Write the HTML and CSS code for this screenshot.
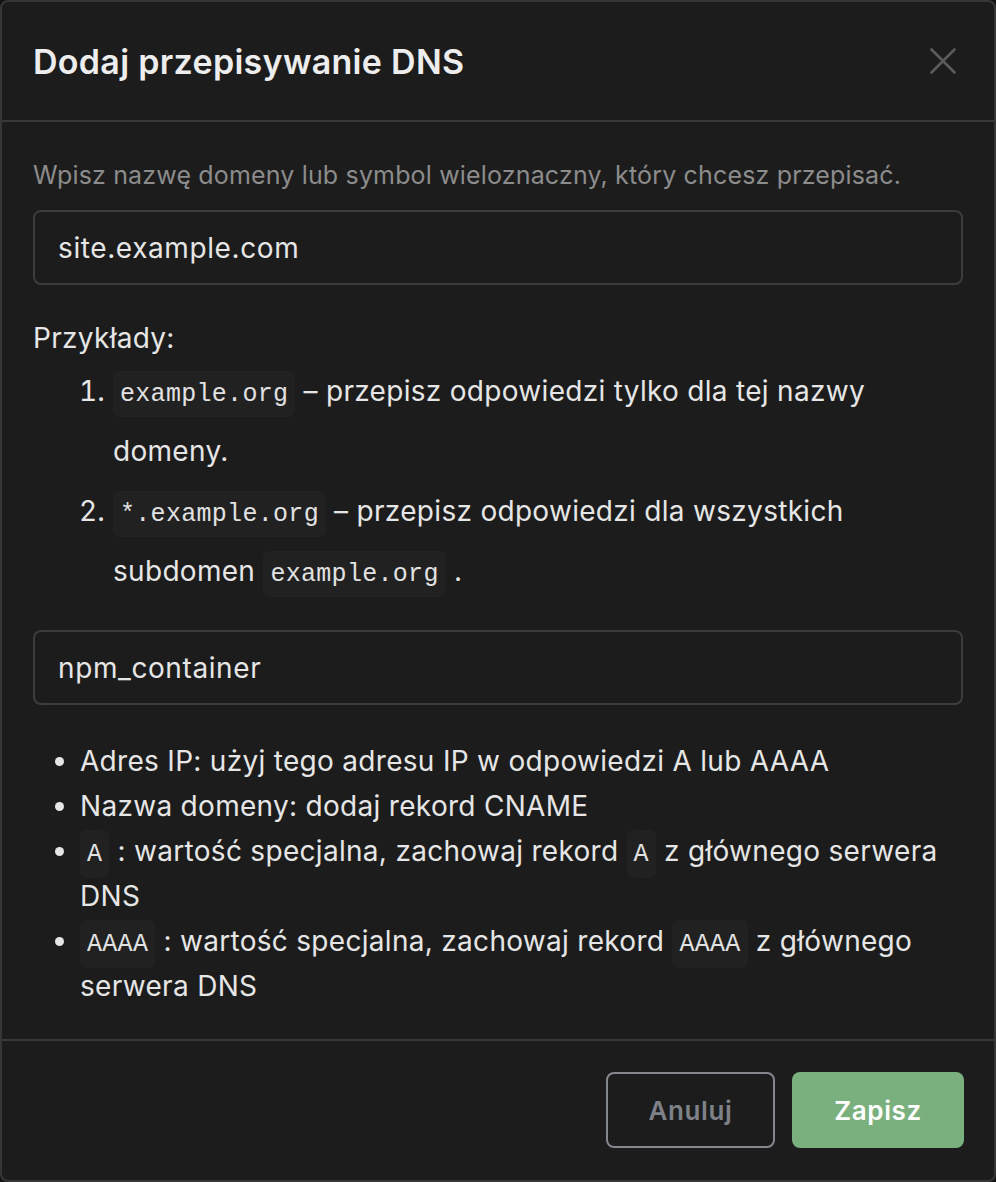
FILE: index.html
```html
<!DOCTYPE html>
<html lang="pl">
<head>
<meta charset="utf-8">
<title>Dodaj przepisywanie DNS</title>
<link rel="stylesheet" href="styles.css">
</head>
<body>
<div class="modal">
  <header class="modal-header">
    <h1 class="modal-title">Dodaj przepisywanie DNS</h1>
    <button class="close" aria-label="Zamknij">
      <svg width="26" height="26" viewBox="0 0 26 26"><path d="M1.5 1.5 L24.5 24.5 M24.5 1.5 L1.5 24.5" stroke="#5b5b5b" stroke-width="2.6" stroke-linecap="round" fill="none"/></svg>
    </button>
  </header>
  <div class="modal-body">
    <p class="hint">Wpisz nazwę domeny lub symbol wieloznaczny, który chcesz przepisać.</p>
    <input class="field" type="text" value="site.example.com">
    <p class="examples-title">Przykłady:</p>
    <ol class="examples">
      <li><code>example.org</code> – przepisz odpowiedzi tylko dla tej nazwy domeny.</li>
      <li><code>*.example.org</code> – przepisz odpowiedzi dla wszystkich subdomen <code>example.org</code> .</li>
    </ol>
    <input class="field field-2" type="text" value="npm_container">
    <ul class="notes">
      <li>Adres IP: użyj tego adresu IP w odpowiedzi A lub AAAA</li>
      <li>Nazwa domeny: dodaj rekord CNAME</li>
      <li><code>A</code> : wartość specjalna, zachowaj rekord <code>A</code> z głównego serwera DNS</li>
      <li><code>AAAA</code> : wartość specjalna, zachowaj rekord <code>AAAA</code> z głównego serwera DNS</li>
    </ul>
  </div>
  <footer class="modal-footer">
    <button class="btn btn-cancel">Anuluj</button>
    <button class="btn btn-save">Zapisz</button>
  </footer>
</div>
</body>
</html>
```

FILE: styles.css
```css
* { box-sizing: border-box; }
html, body {
  margin: 0;
  padding: 0;
  background: #141414;
}
body {
  font-family: Inter, "Noto Sans", "Liberation Sans", sans-serif;
  color: #e6e6e6;
}
.modal {
  width: 996px;
  height: 1182px;
  background: #1c1c1c;
  border: 2px solid #363636;
  border-radius: 8px;
  display: flex;
  flex-direction: column;
  overflow: hidden;
}
.modal-header {
  height: 120px;
  flex: none;
  display: flex;
  align-items: center;
  justify-content: space-between;
  padding: 0 38px 0 31px;
  border-bottom: 2px solid #383838;
}
.modal-title {
  margin: 0;
  font-size: 34px;
  font-weight: 600;
  color: #ededed;
  letter-spacing: 0.3px;
}
.close {
  background: none;
  border: 0;
  padding: 0;
  width: 26px;
  height: 26px;
  display: flex;
  cursor: pointer;
}
.modal-body {
  flex: 1;
  padding: 37px 31px 0 31px;
}
.hint {
  margin: 0 0 19px;
  font-size: 25px;
  line-height: 32px;
  letter-spacing: 0.16px;
  color: #8c8c8c;
}
.field {
  display: block;
  width: 100%;
  height: 75px;
  background: #1c1c1c;
  border: 2px solid #3c3c3c;
  border-radius: 8px;
  padding: 0 23px;
  font-family: Inter, "Noto Sans", "Liberation Sans", sans-serif;
  font-size: 28px;
  letter-spacing: 0.6px;
  color: #e6e6e6;
  outline: none;
}
.examples-title {
  margin: 35px 0 5px;
  font-size: 28px;
  line-height: 36px;
  letter-spacing: 0.3px;
}
.examples {
  margin: 0;
  padding-left: 80px;
  font-size: 28px;
  line-height: 60px;
  letter-spacing: 0.3px;
}
code {
  font-family: "Liberation Mono", "DejaVu Sans Mono", monospace;
  font-size: 25px;
  line-height: 1;
  letter-spacing: 0.3px;
  background: #212121;
  border-radius: 6px;
  padding: 9px 7px 8px;
  color: #e2e2e2;
}
.field-2 {
  margin-top: 29px;
}
.notes {
  margin: 34px 0 0;
  padding-left: 47px;
  font-size: 28px;
  line-height: 45px;
  letter-spacing: 0.3px;
}
.notes code {
  padding: 10px 7px 9px;
}
.modal-footer {
  flex: none;
  border-top: 2px solid #383838;
  padding: 31px 30px 32px;
  display: flex;
  justify-content: flex-end;
  gap: 17px;
}
.btn {
  height: 76px;
  border-radius: 8px;
  font-family: Inter, "Noto Sans", "Liberation Sans", sans-serif;
  font-size: 26px;
  font-weight: 600;
  letter-spacing: 0.6px;
  cursor: pointer;
}
.btn-cancel {
  width: 169px;
  background: transparent;
  border: 2px solid #84878d;
  color: #7e8187;
}
.btn-save {
  width: 172px;
  background: #7aaf7e;
  border: 0;
  color: #ffffff;
}
```
